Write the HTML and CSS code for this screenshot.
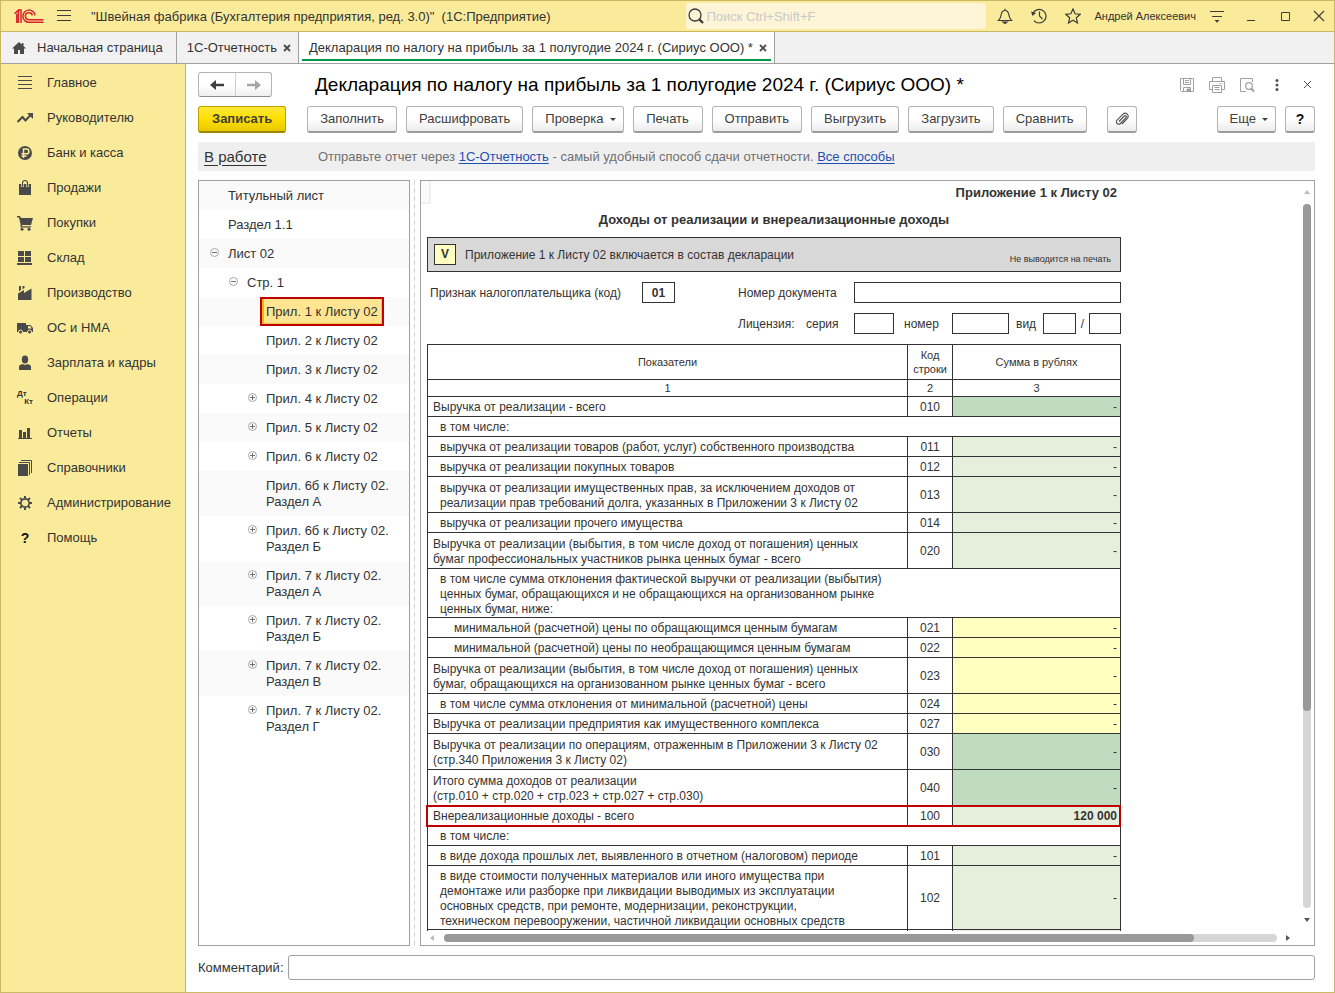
FILE: index.html
```html
<!DOCTYPE html>
<html lang="ru">
<head>
<meta charset="utf-8">
<title>Бухгалтерия предприятия</title>
<link rel="stylesheet" href="styles.css">
</head>
<body>
<div class="window">
  <header class="titlebar">
    <svg class="logo" viewBox="0 0 30 15" width="30" height="15" fill="none" stroke="#d8232a" stroke-width="1.5" aria-label="1С" role="img">
      <path d="M.6 4.600 4.400 1.200V14M2.800 4.800V14M4.400 1H7V14"/>
      <path d="M21 6.400A6.100 6.100 0 1 0 15 13.300H29.500"/>
      <path d="M18.300 6.400A3.500 3.500 0 1 0 15 10.700H29.500"/>
    </svg>
    <button class="icon-btn burger" aria-label="Главное меню"><svg viewBox="0 0 16 14" width="16" height="14" stroke="#3c3c3c" stroke-width="1.2"><path d="M1 1.500h14M1 6.500h14M1 11.500h14"/></svg></button>
    <span class="app-title">"Швейная фабрика (Бухгалтерия предприятия, ред. 3.0)"&nbsp; (1С:Предприятие)</span>
    <label class="search">
      <svg viewBox="0 0 16 16" width="16" height="16" fill="none" stroke="#3c3c3c"><circle cx="7" cy="7" r="6" stroke-width="1.3"/><path d="M11.3 11.3 15 15" stroke-width="2.4"/></svg>
      <input type="text" placeholder="Поиск Ctrl+Shift+F" aria-label="Поиск">
    </label>
    <button class="icon-btn" aria-label="Уведомления"><svg viewBox="0 0 16 16" width="16" height="16" fill="none" stroke="#3c3c3c" stroke-width="1.2"><path d="M1.5 12.5c2-1.6 2.3-3.400 2.700-6C4.700 3.800 6 2.500 8 2.500s3.300 1.300 3.800 4c.4 2.600.7 4.400 2.700 6zM8 .8v1.700"/><path d="M6 14h4l-2 1.500z" fill="#3c3c3c"/></svg></button>
    <button class="icon-btn" aria-label="История"><svg viewBox="0 0 16 16" width="16" height="16" fill="none" stroke="#3c3c3c" stroke-width="1.2"><path d="M1.700 6.200A6.800 6.800 0 1 1 3 12.600M8.500 3.500V8l3 3"/><path d="M0 3.500 5 5 1.500 8z" fill="#3c3c3c" stroke="none"/></svg></button>
    <button class="icon-btn" aria-label="Избранное"><svg viewBox="0 0 16 16" width="16" height="16" fill="none" stroke="#3c3c3c" stroke-width="1.200"><path d="M8 .9l2.100 4.900 5.200.5-4 3.500 1.200 5.200L8 12.300 3.500 15l1.200-5.200-4-3.500 5.200-.5z"/></svg></button>
    <a class="user" href="#">Андрей Алексеевич</a>
    <button class="icon-btn" aria-label="Сервис и настройки"><svg viewBox="0 0 16 16" width="16" height="16" stroke="#3c3c3c" stroke-width="1.200"><path d="M1 3.500h14M3 8.500h10"/><path d="M5.500 12h5L8 14.800z" fill="#3c3c3c" stroke="none"/></svg></button>
    <button class="icon-btn" aria-label="Свернуть"><svg viewBox="0 0 16 16" width="16" height="16" stroke="#3c3c3c"><path d="M4 12.500h8"/></svg></button>
    <button class="icon-btn" aria-label="Развернуть"><svg viewBox="0 0 16 16" width="16" height="16" fill="none" stroke="#3c3c3c"><path d="M4.500 4.500h8v8h-8z"/></svg></button>
    <button class="icon-btn" aria-label="Закрыть"><svg viewBox="0 0 16 16" width="16" height="16" stroke="#3c3c3c" stroke-width="1.100"><path d="M3 3l10 10M13 3 3 13"/></svg></button>
  </header>

  <nav class="tabs">
    <a class="tab tab-home" href="#"><svg viewBox="0 0 16 14" width="16" height="14" fill="#4a4a4a"><path d="M8 1 1 7.500h2V13h4V9h2v4h4V7.500h2L12.500 5V2h-1.700v1.500z"/></svg>Начальная страница</a>
    <div class="tab"><a href="#">1С-Отчетность</a><button class="tab-close" aria-label="Закрыть вкладку"><svg viewBox="0 0 8 8" width="8" height="8" stroke="#4a4a4a" stroke-width="1.800"><path d="M1 1l6 6M7 1 1 7"/></svg></button></div>
    <div class="tab tab-active"><a href="#">Декларация по налогу на прибыль за 1 полугодие 2024 г. (Сириус ООО) *</a><button class="tab-close" aria-label="Закрыть вкладку"><svg viewBox="0 0 8 8" width="8" height="8" stroke="#4a4a4a" stroke-width="1.800"><path d="M1 1l6 6M7 1 1 7"/></svg></button></div>
  </nav>

  <div class="body">
    <nav class="sidebar">
      <a href="#"><svg viewBox="0 0 18 18" width="18" height="18" stroke="#4a4a4a"><path d="M2 2.500h14M2 6.500h14M2 10.500h14M2 14.500h14"/></svg>Главное</a>
      <a href="#"><svg viewBox="0 0 18 18" width="18" height="18" fill="none" stroke="#4a4a4a" stroke-width="2"><path d="M1.500 13l5-5 3 3.500 5-5.500"/><path d="M11 4h6v6z" fill="#4a4a4a" stroke="none"/></svg>Руководителю</a>
      <a href="#"><svg viewBox="0 0 18 18" width="18" height="18"><circle cx="9" cy="9" r="7" fill="#4a4a4a"/><path d="M7.500 14V5h3a2.300 2.300 0 0 1 0 4.800H5.500M5.500 12h5" fill="none" stroke="#faeb9b" stroke-width="1.500"/></svg>Банк и касса</a>
      <a href="#"><svg viewBox="0 0 18 18" width="18" height="18"><path d="M3 5h12v11H3z" fill="#4a4a4a"/><path d="M6.500 8V4a2.500 2.500 0 0 1 5 0v4" fill="none" stroke="#faeb9b" stroke-width="2.400"/><path d="M6.500 7.500V4a2.500 2.500 0 0 1 5 0v3.500" fill="none" stroke="#4a4a4a" stroke-width="1.100"/></svg>Продажи</a>
      <a href="#"><svg viewBox="0 0 18 18" width="18" height="18" fill="#4a4a4a"><path d="M1 2h3l1 2h12l-2 7H6v1.200h9v1.300H4.500V10L3 3.500H1z"/><circle cx="6" cy="15.300" r="1.500"/><circle cx="13" cy="15.300" r="1.500"/></svg>Покупки</a>
      <a href="#"><svg viewBox="0 0 18 18" width="18" height="18" fill="#4a4a4a"><path d="M2 2h6v5H2zM9 2h6v5H9zM2 8h6v5H2zM9 8h6v5H9zM1 14h15v2H1z"/></svg>Склад</a>
      <a href="#"><svg viewBox="0 0 18 18" width="18" height="18" fill="#4a4a4a"><path d="M2 16V9.500l6-3.500v3l7.500-4.500V16zM3 2h2v4L3 7.200zM6.500 2h2v2L6.500 5.200z"/></svg>Производство</a>
      <a href="#"><svg viewBox="0 0 18 18" width="18" height="18" fill="#4a4a4a"><path d="M1 4h9v9H1zM10 6h4.500L17 9v4h-7z"/><path d="M12 7h2.200l1.500 2.500H12z" fill="#faeb9b"/><circle cx="4.500" cy="13" r="2" stroke="#faeb9b"/><circle cx="13.500" cy="13" r="2" stroke="#faeb9b"/></svg>ОС и НМА</a>
      <a href="#"><svg viewBox="0 0 18 18" width="18" height="18" fill="#4a4a4a"><ellipse cx="9" cy="5.500" rx="3.200" ry="4"/><path d="M3 16v-3.500c0-1.500 2-2 3.500-2.500L9 11l2.500-1c1.500.5 3.500 1 3.500 2.500V16z"/></svg>Зарплата и кадры</a>
      <a href="#"><span class="dtkt" aria-hidden="true"><b>Дт</b><b>Кт</b></span>Операции</a>
      <a href="#"><svg viewBox="0 0 18 18" width="18" height="18" fill="#4a4a4a"><path d="M3 6h3v8H3zM7 8h3v6H7zM11 4h3v10h-3zM2 14h14v1H2z"/></svg>Отчеты</a>
      <a href="#"><svg viewBox="0 0 18 18" width="18" height="18" fill="none" stroke="#4a4a4a"><path d="M2 5h10v12H2z" fill="#4a4a4a" stroke="none"/><path d="M3 3.500h10.500V16M5 1.500h10.500V14"/></svg>Справочники</a>
      <a href="#"><svg viewBox="0 0 18 18" width="18" height="18" fill="none" stroke="#4a4a4a"><circle cx="9" cy="9" r="4.200" stroke-width="1.700"/><path d="M9 2v2.500M9 13.500V16M2 9h2.500M13.500 9H16M4 4l1.900 1.900M12.100 12.100 14 14M14 4l-1.900 1.900M5.900 12.100 4 14" stroke-width="2"/></svg>Администрирование</a>
      <a href="#"><span class="qmark" aria-hidden="true">?</span>Помощь</a>
    </nav>

    <main class="main">
      <div class="head">
        <div class="history">
          <button aria-label="Назад"><svg viewBox="0 0 14 10" width="14" height="10"><path d="M0 5l6-5v3.700h8v2.600H6V10z" fill="#3f3f3f"/></svg></button><button aria-label="Вперед"><svg viewBox="0 0 14 10" width="14" height="10"><path d="M14 5 8 0v3.700H0v2.600h8V10z" fill="#a6a6a6"/></svg></button>
        </div>
        <h1>Декларация по налогу на прибыль за 1 полугодие 2024 г. (Сириус ООО) *</h1>
        <div class="head-tools">
          <button class="icon-btn" aria-label="Сохранить"><svg viewBox="0 0 16 16" width="16" height="16" fill="none" stroke="#a0a0a0"><path d="M1.500 1.500h13v13h-12l-1-1zM4.500 1.500v6h7v-6M6 3.500h4M6 5.500h4M4.500 14.500v-4h7v4"/><path d="M8 12h3v2.500H8z" fill="#a0a0a0"/></svg></button>
          <button class="icon-btn" aria-label="Печать"><svg viewBox="0 0 16 16" width="16" height="16" fill="none" stroke="#a0a0a0"><path d="M3.500 4.500v-4h9v4M3.500 12.500h-3v-8h15v8h-3M3.500 8.500h9v7h-9zM5.500 10.500h5M5.500 12.500h5M10.500 6.500h1M12.500 6.500h1"/></svg></button>
          <button class="icon-btn" aria-label="Предварительный просмотр"><svg viewBox="0 0 16 16" width="16" height="16" fill="none" stroke="#a0a0a0"><path d="M13.500 5V1.500h-12v13H7"/><circle cx="10" cy="9" r="3.300" stroke-width="1.200"/><path d="M12.300 11.500 15 14.500" stroke-width="2"/></svg></button>
          <button class="icon-btn" aria-label="Дополнительно"><svg viewBox="0 0 16 16" width="16" height="16" fill="#505050"><circle cx="8" cy="3.500" r="1.500"/><circle cx="8" cy="8" r="1.500"/><circle cx="8" cy="12.500" r="1.500"/></svg></button>
          <button class="icon-btn" aria-label="Закрыть форму"><svg viewBox="0 0 16 16" width="16" height="16" stroke="#505050"><path d="M5 4l7 7M12 4l-7 7"/></svg></button>
        </div>
      </div>

      <div class="toolbar">
        <button class="btn primary">Записать</button>
        <button class="btn">Заполнить</button>
        <button class="btn">Расшифровать</button>
        <button class="btn drop">Проверка</button>
        <button class="btn">Печать</button>
        <button class="btn">Отправить</button>
        <button class="btn">Выгрузить</button>
        <button class="btn">Загрузить</button>
        <button class="btn">Сравнить</button>
        <button class="btn square clip" aria-label="Присоединенные файлы"><svg viewBox="0 0 14 14" width="14" height="14" fill="none" stroke="#505050" stroke-width="1.100"><path d="M4 9.500 9.300 4a1.200 1.200 0 0 1 1.700 1.700l-5.600 5.800a2.300 2.300 0 0 1-3.300-3.300L8 2.100a3 3 0 0 1 4.300 4.300L7 12"/></svg></button>
        <button class="btn drop more">Еще</button>
        <button class="btn square help">?</button>
      </div>

      <div class="notice">
        <a class="status" href="#">В работе</a>
        <p>Отправьте отчет через <a href="#">1С-Отчетность</a> - самый удобный способ сдачи отчетности. <a href="#">Все способы</a></p>
      </div>

      <div class="work">
        <ul class="tree">
          <li class="l0"><span class="tg"></span><a href="#">Титульный лист</a></li>
          <li class="l0"><span class="tg"></span><a href="#">Раздел 1.1</a></li>
          <li class="l0"><button class="tg minus" aria-label="Свернуть"></button><a href="#">Лист 02</a></li>
          <li class="l1"><button class="tg minus" aria-label="Свернуть"></button><a href="#">Стр. 1</a></li>
          <li class="l2"><span class="tg"></span><a class="selected" href="#">Прил. 1 к Листу 02</a></li>
          <li class="l2"><span class="tg"></span><a href="#">Прил. 2 к Листу 02</a></li>
          <li class="l2"><span class="tg"></span><a href="#">Прил. 3 к Листу 02</a></li>
          <li class="l2"><button class="tg plus" aria-label="Развернуть"></button><a href="#">Прил. 4 к Листу 02</a></li>
          <li class="l2"><button class="tg plus" aria-label="Развернуть"></button><a href="#">Прил. 5 к Листу 02</a></li>
          <li class="l2"><button class="tg plus" aria-label="Развернуть"></button><a href="#">Прил. 6 к Листу 02</a></li>
          <li class="l2"><span class="tg"></span><a href="#">Прил. 6б к Листу 02.<br>Раздел А</a></li>
          <li class="l2"><button class="tg plus" aria-label="Развернуть"></button><a href="#">Прил. 6б к Листу 02.<br>Раздел Б</a></li>
          <li class="l2"><button class="tg plus" aria-label="Развернуть"></button><a href="#">Прил. 7 к Листу 02.<br>Раздел А</a></li>
          <li class="l2"><button class="tg plus" aria-label="Развернуть"></button><a href="#">Прил. 7 к Листу 02.<br>Раздел Б</a></li>
          <li class="l2"><button class="tg plus" aria-label="Развернуть"></button><a href="#">Прил. 7 к Листу 02.<br>Раздел В</a></li>
          <li class="l2"><button class="tg plus" aria-label="Развернуть"></button><a href="#">Прил. 7 к Листу 02.<br>Раздел Г</a></li>
        </ul>
        <div class="splitter"></div>
        <section class="viewer">
          <div class="page">
            <div class="corner"></div>
            <div class="sheet">
              <p class="annex">Приложение 1 к Листу 02</p>
              <h2>Доходы от реализации и внереализационные доходы</h2>
              <div class="include">
                <input id="include" type="checkbox" checked>
                <label for="include">Приложение 1 к Листу 02 включается в состав декларации</label>
                <small>Не выводится на печать</small>
              </div>
              <div class="fields taxpayer">
                <label for="sign">Признак налогоплательщика (код)</label><input id="sign" type="text" value="01">
                <label class="doc-label" for="docnum">Номер документа</label><input id="docnum" type="text">
              </div>
              <div class="fields license">
                <span>Лицензия:</span><label for="ser">серия</label><input id="ser" type="text">
                <label class="mid" for="num">номер</label><input id="num" type="text">
                <label class="kind" for="kind">вид</label><input id="kind" type="text">
                <span class="slash">/</span><input aria-label="вид, вторая часть" type="text">
              </div>
              <table class="report">
                <colgroup><col><col class="c-code"><col class="c-sum"></colgroup>
                <thead>
                  <tr class="h"><th>Показатели</th><th>Код строки</th><th>Сумма в рублях</th></tr>
                  <tr class="n"><th>1</th><th>2</th><th>3</th></tr>
                </thead>
                <tbody>
                  <tr><td>Выручка от реализации - всего</td><td>010</td><td class="total">-</td></tr>
                  <tr><td class="in1" colspan="3">в том числе:</td></tr>
                  <tr><td class="in1">выручка от реализации товаров (работ, услуг) собственного производства</td><td>011</td><td class="calc">-</td></tr>
                  <tr><td class="in1">выручка от реализации покупных товаров</td><td>012</td><td class="calc">-</td></tr>
                  <tr class="r2"><td class="in1">выручка от реализации имущественных прав, за исключением доходов от<br>реализации прав требований долга, указанных в Приложении 3 к Листу 02</td><td>013</td><td class="calc">-</td></tr>
                  <tr><td class="in1">выручка от реализации прочего имущества</td><td>014</td><td class="calc">-</td></tr>
                  <tr class="r2"><td>Выручка от реализации (выбытия, в том числе доход от погашения) ценных<br>бумаг профессиональных участников рынка ценных бумаг - всего</td><td>020</td><td class="calc">-</td></tr>
                  <tr class="r3"><td class="in1" colspan="3">в том числе сумма отклонения фактической выручки от реализации (выбытия)<br>ценных бумаг, обращающихся и не обращающихся на организованном рынке<br>ценных бумаг, ниже:</td></tr>
                  <tr><td class="in2">минимальной (расчетной) цены по обращающимся ценным бумагам</td><td>021</td><td class="edit">-</td></tr>
                  <tr><td class="in2">минимальной (расчетной) цены по необращающимся ценным бумагам</td><td>022</td><td class="edit">-</td></tr>
                  <tr class="r2"><td>Выручка от реализации (выбытия, в том числе доход от погашения) ценных<br>бумаг, обращающихся на организованном рынке ценных бумаг - всего</td><td>023</td><td class="edit">-</td></tr>
                  <tr><td class="in1">в том числе сумма отклонения от минимальной (расчетной) цены</td><td>024</td><td class="edit">-</td></tr>
                  <tr><td>Выручка от реализации предприятия как имущественного комплекса</td><td>027</td><td class="edit">-</td></tr>
                  <tr class="r2"><td>Выручка от реализации по операциям, отраженным в Приложении 3 к Листу 02<br>(стр.340 Приложения 3 к Листу 02)</td><td>030</td><td class="total">-</td></tr>
                  <tr class="r2"><td>Итого сумма доходов от реализации<br>(стр.010 + стр.020 + стр.023 + стр.027 + стр.030)</td><td>040</td><td class="total">-</td></tr>
                  <tr class="marked"><td>Внереализационные доходы - всего</td><td>100</td><td class="calc"><b>120 000</b></td></tr>
                  <tr><td class="in1" colspan="3">в том числе:</td></tr>
                  <tr><td class="in1">в виде дохода прошлых лет, выявленного в отчетном (налоговом) периоде</td><td>101</td><td class="calc">-</td></tr>
                  <tr class="r4"><td class="in1">в виде стоимости полученных материалов или иного имущества при<br>демонтаже или разборке при ликвидации выводимых из эксплуатации<br>основных средств, при ремонте, модернизации, реконструкции,<br>техническом перевооружении, частичной ликвидации основных средств</td><td>102</td><td class="calc">-</td></tr>
                  <tr><td></td><td></td><td class="calc"></td></tr>
                </tbody>
              </table>
            </div>
          </div>
          <div class="vscroll"><i class="arrow up off"></i><div class="track"><div class="thumb"></div></div><i class="arrow down"></i></div>
          <div class="hscroll"><i class="arrow left off"></i><div class="track"><div class="thumb"></div></div><i class="arrow right"></i></div>
        </section>
      </div>

      <div class="comment">
        <label for="comment">Комментарий:</label>
        <input id="comment" type="text">
      </div>
    </main>
  </div>
</div>
</body>
</html>
```

FILE: styles.css
```css
* { box-sizing: border-box; }

body {
  margin: 0;
  font: 13px/16px "Liberation Sans", Arial, sans-serif;
  color: #333;
  background: #fff;
}

a { color: inherit; text-decoration: none; }
button, input { font: inherit; color: inherit; }
button { padding: 0; border: 0; background: none; }
input { border-radius: 0; }
svg { display: block; flex: none; }

.window {
  display: flex;
  flex-direction: column;
  height: 100vh;
  border: 1px solid #c8b965;
}

/* Title bar */
.titlebar {
  display: flex;
  align-items: center;
  gap: 14px;
  height: 31px;
  padding: 0 5px 0 13px;
  background: #faeb9b;
  border-bottom: 1px solid #c8b965;
}
.icon-btn {
  display: flex;
  align-items: center;
  justify-content: center;
  width: 20px;
  height: 20px;
}
.titlebar .burger { width: 16px; margin-left: -2px; }
.app-title { margin-left: 5px; padding-top: 2px; flex: 1; white-space: nowrap; }
.search {
  display: flex;
  align-items: center;
  gap: 2px;
  width: 300px;
  height: 26px;
  margin-right: -5px;
  padding-left: 2px;
  background: #fdf5d6;
  border-radius: 2px;
}
.search input { flex: 1; min-width: 0; padding: 1px 0 0; border: 0; background: none; outline: 0; }
.search input::placeholder { color: #c9c9c9; opacity: 1; }
.user { margin: 0 -3px; font-size: 11px; }

/* Tabs */
.tabs {
  display: flex;
  height: 32px;
  background: #f1f1f1;
  border-bottom: 1px solid #a0a0a0;
}
.tab {
  display: flex;
  align-items: center;
  gap: 6px;
  padding: 0 7px 0 10px;
  border-right: 1px solid #a0a0a0;
  white-space: nowrap;
}
.tab-home { gap: 10px; padding-right: 13px; }
.tab-close { padding: 4px 0; }
.tab-active {
  background:
    linear-gradient(#009646, #009646) center 27px / calc(100% - 6px) 2px no-repeat,
    #fff;
}

.body { display: flex; flex: 1; min-height: 0; }

/* Sections */
.sidebar {
  width: 185px;
  flex: none;
  padding-top: 1px;
  background: #faeb9b;
  border-right: 1px solid #c8b965;
}
.sidebar a {
  display: flex;
  align-items: center;
  gap: 13px;
  height: 35px;
  padding-left: 15px;
}
.dtkt {
  display: flex;
  flex-direction: column;
  width: 18px;
  padding: 0 1px;
  font-size: 8px;
  line-height: 8px;
}
.dtkt b:last-child { align-self: flex-end; }
.qmark { width: 18px; font-weight: bold; font-size: 14px; text-align: center; color: #111; }

/* Form */
.main {
  display: flex;
  flex-direction: column;
  flex: 1;
  min-width: 0;
  padding: 8px 19px 12px 12px;
}
.head { display: flex; align-items: center; height: 25px; }
.history {
  display: flex;
  border: 1px solid #b4b4b4;
  border-bottom-color: #8c8c8c;
  border-radius: 3px;
  background: linear-gradient(#fff 50%, #efefef);
}
.history button {
  display: flex;
  align-items: center;
  justify-content: center;
  width: 36px;
  height: 23px;
}
.history button + button { border-left: 1px solid #d0d0d0; }
h1 {
  flex: 1;
  margin: 0 0 0 43px;
  font-size: 19px;
  line-height: 24px;
  font-weight: normal;
  color: #000;
  white-space: nowrap;
}
.head-tools { display: flex; gap: 14px; }
.head-tools .icon-btn { width: 16px; }

.toolbar { display: flex; gap: 9px; margin-top: 9px; }
.btn {
  min-width: 70px;
  height: 27px;
  padding: 0 12px;
  border: 1px solid #b4b4b4;
  border-bottom: 2px solid #9c9c9c;
  border-radius: 3px;
  background: linear-gradient(#fff 50%, #ececec);
  color: #404040;
  white-space: nowrap;
}
.primary {
  margin-right: 12px;
  padding: 0 13px;
  border-color: #c0a000 #c0a000 #9c8600;
  background: linear-gradient(#ffe838, #ffdf00 50%, #e8c800);
  font-weight: bold;
}
.drop::after {
  content: "";
  display: inline-block;
  margin-left: 6px;
  vertical-align: 2px;
  border: 3px solid transparent;
  border-top-color: #404040;
  border-bottom: 0;
}
.drop { padding-right: 7px; }
.square {
  display: flex;
  align-items: center;
  justify-content: center;
  width: 30px;
  min-width: 0;
  padding: 0;
}
.clip { margin-left: 11px; }
.more { min-width: 0; margin-left: auto; }
.help { font-weight: bold; font-size: 14px; color: #111; }

.notice {
  display: flex;
  align-items: center;
  height: 29px;
  margin-top: 9px;
  padding-left: 6px;
  background: #efefef;
  color: #707070;
}
.status {
  width: 114px;
  font-size: 15px;
  color: #333;
  text-decoration: underline;
  text-underline-offset: 3px;
}
.notice p { margin: 0; }
.notice p a { color: #1e50b4; text-decoration: underline; text-underline-offset: 2px; }

.work { display: flex; flex: 1; min-height: 0; margin-top: 9px; }

/* Section tree */
.tree {
  width: 212px;
  flex: none;
  margin: 0;
  padding: 0;
  list-style: none;
  border: 1px solid #a0a0a0;
  overflow: hidden;
}
.tree li { display: flex; gap: 3px; padding-left: 11px; }
.tree li:nth-child(odd) { background: #fafafa; }
.tree .l1 { padding-left: 30px; }
.tree .l2 { padding-left: 49px; }
.tree a { padding: 7px 6px 6px; white-space: nowrap; }
.tree .selected {
  background: #ffe591;
  border: 2px solid #c00000;
  box-shadow: inset 2px 0 #f0b90a, inset -1px -1px #f0c83c;
  padding: 5px 4px 4px;
}
.tg { width: 9px; height: 9px; margin-top: 9px; flex: none; }
.minus, .plus {
  border: 1px solid #a8a8a8;
  border-radius: 50%;
  background: linear-gradient(#707070, #707070) center / 5px 1px no-repeat;
}
.plus {
  background:
    linear-gradient(#707070, #707070) center / 5px 1px no-repeat,
    linear-gradient(#707070, #707070) center / 1px 5px no-repeat;
}

.splitter {
  width: 1px;
  margin: 0 5px 0 4px;
  background: repeating-linear-gradient(#d4d4d4 0 5px, transparent 5px 8px);
}

/* Spreadsheet viewer */
.viewer {
  display: grid;
  grid-template: minmax(0, 1fr) 14px / minmax(0, 1fr) 15px;
  flex: 1;
  min-width: 0;
  border: 1px solid #a0a0a0;
}
.page { position: relative; overflow: hidden; }
.corner {
  position: absolute;
  top: 0;
  left: 0;
  width: 10px;
  height: 23px;
  background: #fafafa;
  border: solid #f0f0f0;
  border-width: 0 2px 2px 0;
}
.sheet {
  width: 694px;
  margin-left: 6px;
  padding-top: 3px;
  font-size: 12px;
  line-height: 15px;
}
.annex {
  margin: 0;
  padding-right: 4px;
  font-size: 13px;
  line-height: 17px;
  font-weight: bold;
  text-align: right;
}
h2 { margin: 11px 0 9px; font-size: 13px; line-height: 16px; text-align: center; }
.include {
  display: flex;
  align-items: center;
  gap: 9px;
  height: 35px;
  padding: 0 9px 0 6px;
  background: #d8d8d8;
  border: 1px solid #333;
}
.include label { flex: 1; padding-top: 2px; }
.include input {
  display: flex;
  align-items: center;
  justify-content: center;
  width: 22px;
  height: 21px;
  margin: 0;
  appearance: none;
  background: #ffffc0;
  border: 1px solid #333;
}
.include input:checked::before { content: "V"; font-weight: bold; }
.include small { align-self: flex-end; padding-bottom: 6px; font-size: 9px; line-height: 12px; }

.fields { display: grid; align-items: center; margin-top: 10px; }
.fields label, .fields span { padding-top: 2px; }
.fields input {
  width: 100%;
  min-width: 0;
  height: 21px;
  padding: 0;
  border: 1px solid #333;
  font-weight: bold;
  text-align: center;
}
.taxpayer { grid-template-columns: 215px 33px 179px 1fr; }
.taxpayer label:first-child { padding-left: 3px; }
.taxpayer .doc-label { padding-left: 63px; }
.license { grid-template-columns: 68px 48px 40px 58px 57px 34px 33px 13px 32px; padding-left: 311px; }
.license .mid { padding-left: 10px; }
.license .kind { padding-left: 7px; }
.slash { text-align: center; }

.report {
  width: 100%;
  margin-top: 10px;
  table-layout: fixed;
  border-collapse: collapse;
}
.c-code { width: 45px; }
.c-sum { width: 168px; }
.report tr { height: 20px; }
.report th { padding: 0 3px; border: 1px solid #333; font-size: 11px; line-height: 14px; font-weight: normal; }
.report td { padding: 2px 5px 0; border: 1px solid #333; }
.report td:nth-child(2) { padding: 2px 0 0; text-align: center; }
.report td:nth-child(3) { padding: 2px 3px 0; text-align: right; }
.report .h { height: 35px; }
.report .n { height: 17px; }
.report .r2 { height: 36px; }
.report .r3 { height: 49px; }
.report .r4 { height: 64px; }
.report .in1 { padding-left: 12px; }
.report .in2 { padding-left: 26px; }
.total { background: #c0dcc0; }
.calc { background: #e6efdc; }
.edit { background: #ffffc0; }
.marked { position: relative; }
.marked td:first-child::after {
  content: "";
  position: absolute;
  inset: -1px 0 -1px -2px;
  border: 2px solid #c00000;
}

/* Scroll bars */
.vscroll, .hscroll { display: flex; align-items: center; }
.vscroll { flex-direction: column; }
.track { flex: 1; background: #d6d6d6; border-radius: 4px; }
.thumb { background: #999; border-radius: 4px; }
.vscroll .track { width: 8px; }
.vscroll .thumb { height: 72%; }
.hscroll .track { height: 8px; }
.hscroll .thumb { width: 90%; height: 8px; }
.arrow { border: 3px solid transparent; }
.up { margin: 9px 0 10px; border-bottom: 4px solid #555; border-top: 0; }
.down { margin: 10px 0 9px; border-top: 4px solid #555; border-bottom: 0; }
.left { margin: 0 10px 0 9px; border-right: 4px solid #555; border-left: 0; }
.right { margin: 0 9px; border-left: 4px solid #555; border-right: 0; }
.up.off { border-bottom-color: #bbb; }
.left.off { border-right-color: #bbb; }

.comment { display: flex; align-items: center; gap: 4px; margin-top: 9px; }
.comment input {
  flex: 1;
  min-width: 0;
  height: 25px;
  border: 1px solid #a0a0a0;
  border-radius: 3px;
}
```
